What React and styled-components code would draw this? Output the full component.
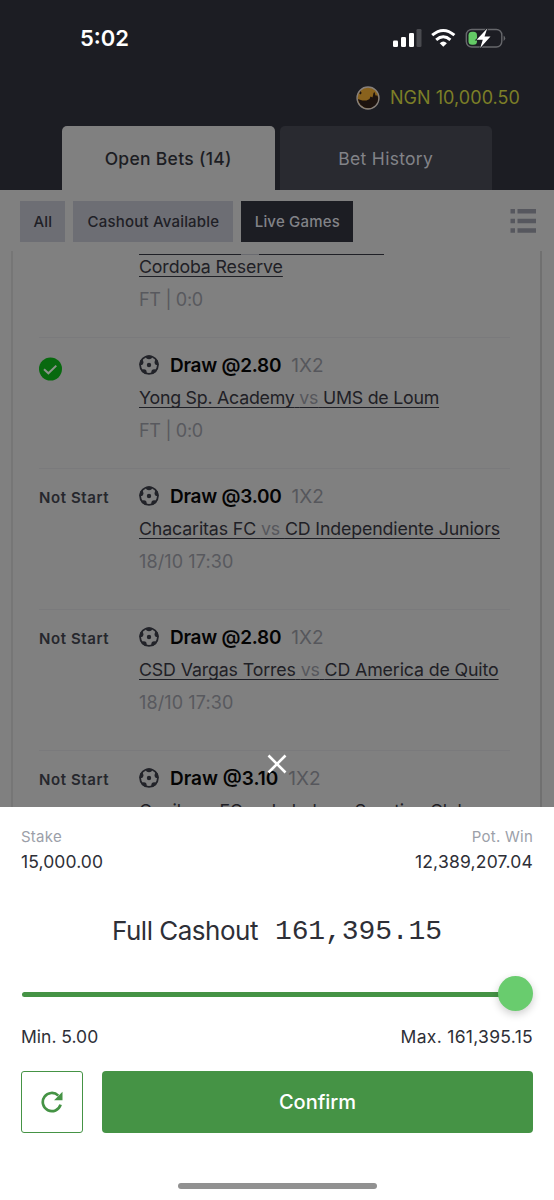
import styled, { createGlobalStyle } from 'styled-components';

const GlobalStyle = createGlobalStyle`
  * {
    box-sizing: border-box;
  }

  body {
    margin: 0;
    font-family: Inter, "Liberation Sans", sans-serif;
    background-color: #808080;
  }
`;

const Screen = styled.div`
  position: relative;
  width: 554px;
  height: 1200px;
  overflow: hidden;
  display: flex;
  flex-direction: column;
  background-color: #808080;
`;

const Header = styled.header`
  height: 190px;
  flex-shrink: 0;
  display: flex;
  flex-direction: column;
  background-color: #1c1d23;
`;

const StatusBar = styled.div`
  height: 75px;
  padding: 0 48px 0 80px;
  display: flex;
  align-items: center;
  justify-content: space-between;
`;

const Time = styled.span`
  font-size: 22px;
  font-weight: 600;
  color: #ffffff;
`;

const Balance = styled.div`
  height: 45px;
  padding-right: 34px;
  display: flex;
  align-items: center;
  justify-content: flex-end;
  gap: 10px;
  font-size: 18px;
  letter-spacing: 0.05px;
  color: #7c7f27;
`;

const Tabs = styled.div`
  height: 64px;
  margin-top: auto;
  padding: 0 62px;
  display: grid;
  grid-template-columns: 1fr 1fr;
  gap: 5px;
`;

const Tab = styled.div`
  display: flex;
  align-items: center;
  justify-content: center;
  border-radius: 5px 5px 0 0;
  font-size: 17.5px;
  font-weight: ${(props) => (props.$active ? 500 : 400)};
  letter-spacing: 0.3px;
  color: ${(props) => (props.$active ? '#1c1d23' : '#828388')};
  background-color: ${(props) => (props.$active ? '#808080' : '#292a30')};
`;

const Filters = styled.div`
  height: 61px;
  flex-shrink: 0;
  padding: 1px 18px 0 20.4px;
  display: flex;
  align-items: center;
  gap: 8px;
`;

const Filter = styled.div`
  width: ${(props) => props.$width};
  height: 41px;
  display: flex;
  align-items: center;
  justify-content: center;
  font-size: 15px;
  font-weight: 500;
  letter-spacing: 0.2px;
  color: ${(props) => (props.$active ? '#828388' : '#1f2026')};
  background-color: ${(props) => (props.$active ? '#1c1d23' : '#6d6e74')};
`;

const ListIcon = styled.svg`
  margin: -1px 0 0 auto;
`;

const BetCard = styled.main`
  height: 556px;
  flex-shrink: 0;
  margin: 0 12px 0 11px;
  padding: 0 30px 0 26px;
  overflow: hidden;
  border-left: 2px solid #767676;
  border-right: 2px solid #707070;
`;

const Bet = styled.div`
  height: ${(props) => props.$height};
  display: grid;
  grid-template-columns: 100px 1fr;
  border-bottom: 1px solid #7a7a7c;
`;

const Status = styled.div`
  padding-top: 17px;
  font-size: 15px;
  font-weight: 600;
  line-height: 24px;
  letter-spacing: 0.6px;
  color: #26272d;
`;

const Details = styled.div`
  padding-top: ${(props) => props.$top || '11px'};
  white-space: nowrap;
`;

const Pick = styled.div`
  height: 32px;
  display: flex;
  align-items: center;
  font-size: 19px;
  font-weight: 600;
  color: #040404;
`;

const Odds = styled.span`
  margin-left: 11px;
  letter-spacing: ${(props) => props.$spacing || '-0.25px'};
`;

const Market = styled.span`
  margin-left: 10px;
  font-weight: 400;
  color: #56575c;
`;

const Teams = styled.div`
  height: 33px;
  margin-top: ${(props) => props.$offset || '0'};
  line-height: 33px;
  font-size: 17.8px;
  letter-spacing: ${(props) => props.$spacing || '-0.14px'};
  color: #1f2026;
  text-decoration: underline;
  text-decoration-thickness: 1px;
  text-underline-offset: 3px;
  text-decoration-skip-ink: none;
`;

const Versus = styled.span`
  color: #56575c;
`;

const Kickoff = styled.div`
  height: 32px;
  margin-top: 1px;
  line-height: 32px;
  font-size: 18px;
  letter-spacing: ${(props) => props.$spacing || '0.1px'};
  color: #58595e;
`;

const CutUnderline = styled.div`
  height: 1px;
  display: flex;
`;

const Dash = styled.span`
  width: ${(props) => props.$width};
  background-color: ${(props) => props.$color || '#1f2026'};
`;

const CloseIcon = styled.svg`
  position: absolute;
  left: 267px;
  top: 754px;
`;

const Sheet = styled.section`
  flex: 1;
  padding: 20px 21px 0;
  display: flex;
  flex-direction: column;
  color: #2e2f37;
  background-color: #ffffff;
`;

const SplitRow = styled.div`
  display: flex;
  justify-content: space-between;
`;

const Figure = styled.div`
  text-align: ${(props) => props.$align || 'left'};
`;

const Label = styled.div`
  height: 20px;
  line-height: 20px;
  font-size: 15px;
  letter-spacing: 0.25px;
  color: #9c9fa9;
`;

const Value = styled.div`
  height: 30px;
  line-height: 30px;
  font-size: 17.5px;
  letter-spacing: ${(props) => props.$spacing || '0.1px'};
`;

const Cashout = styled.div`
  height: 98px;
  padding-top: 8px;
  display: flex;
  align-items: center;
  justify-content: center;
  gap: 17px;
  font-size: 26px;
  letter-spacing: -0.5px;
`;

const Amount = styled.span`
  margin-top: 2px;
  font-family: "Liberation Mono", monospace;
  font-size: 28px;
  letter-spacing: -0.1px;
`;

const Slider = styled.div`
  height: 36px;
  display: flex;
  align-items: center;
`;

const Track = styled.div`
  height: 5px;
  flex: 1;
  margin: 3px -1px 0 1px;
  border-radius: 3px 0 0 3px;
  background-color: #459345;
`;

const Thumb = styled.div`
  width: 35px;
  height: 35px;
  border-radius: 50%;
  background-color: #69cc6e;
  box-shadow: 0 3px 8px rgba(0, 0, 0, 0.2);
`;

const Limits = styled(SplitRow)`
  height: 60px;
  padding-top: 11px;
`;

const Actions = styled.div`
  display: flex;
  gap: 19px;
`;

const RefreshButton = styled.button`
  width: 62px;
  height: 62px;
  padding: 0;
  display: flex;
  align-items: center;
  justify-content: center;
  border: 1.5px solid #459345;
  border-radius: 3px;
  background: none;
`;

const ConfirmButton = styled.button`
  flex: 1;
  height: 62px;
  padding: 0;
  border: none;
  border-radius: 4px;
  font-family: inherit;
  font-size: 20px;
  font-weight: 500;
  color: #ffffff;
  background-color: #459345;
`;

const HomeIndicator = styled.div`
  width: 199px;
  height: 6px;
  margin: auto auto 11px;
  border-radius: 3px;
  background-color: #919191;
`;

const WonMark = styled.svg`
  display: block;
  margin-top: 2px;
`;

const Ball = () => (
  <svg width="20" height="20" viewBox="0 0 20 20">
    <clipPath id="ball">
      <circle cx="10" cy="10" r="9.8" />
    </clipPath>
    <circle cx="10" cy="10" r="8.900" fill="none" stroke="#222329" strokeWidth="1.800" />
    <g fill="#222329" clipPath="url(#ball)">
      <circle cx="10" cy="10" r="2.200" />
      <circle cx="10" cy="1" r="3.200" />
      <circle cx="18.500" cy="7.200" r="2.900" />
      <circle cx="15.200" cy="17.200" r="2.900" />
      <circle cx="4.800" cy="17.200" r="2.900" />
      <circle cx="1.500" cy="7.200" r="2.900" />
    </g>
  </svg>
);

const WonIcon = () => (
  <WonMark width="24" height="24" viewBox="0 0 24 24">
    <circle cx="11.500" cy="12" r="11.500" fill="#08690f" />
    <path d="M5 12.200l4.400 4.100 7.900-7.700" fill="none" stroke="#8b948b" strokeWidth="2" />
  </WonMark>
);

const Avatar = () => (
  <svg width="24" height="24" viewBox="0 0 24 24">
    <circle cx="12" cy="12" r="11" fill="#89621d" />
    <path
      fill="#1d130f"
      d="M1.500 13l5 1.500 4 0 3-1.500 1-2.500 2 1 1-4.500 1-1 1 3.500 2 0 1 4-1 4-3.500 3.500-5 1.500-5-1-4-3zM3 7l1.500-2 1.200 2-1.200 1.500z"
    />
    <circle cx="12" cy="12" r="11" fill="none" stroke="#87807c" strokeWidth="1.300" />
  </svg>
);

const StatusIcons = () => (
  <svg width="113" height="20" viewBox="393 27 113 20">
    <g fill="#ffffff">
      <rect x="393" y="39.500" width="5" height="6.500" rx="1.300" />
      <rect x="401" y="36" width="5" height="10" rx="1.300" />
      <rect x="409" y="32" width="5" height="14" rx="1.300" />
      <rect x="416.500" y="28" width="5" height="18" rx="1.300" fill="#494a4f" />
      <path d="M443.300 45.800l-3.600-3.600q3.600-3.200 7.200 0z" />
    </g>
    <g fill="none" stroke="#ffffff" strokeWidth="3">
      <path d="M432.200 34.200q11.100-9.500 22.200 0" />
      <path d="M436.200 38.800q7.100-6 14.200 0" />
    </g>
    <rect x="466.300" y="28.500" width="35.500" height="17.500" rx="5.500" fill="none" stroke="#66676b" strokeWidth="1.400" />
    <path d="M503.600 34.500q3.200 2.700 0 5.500z" fill="#66676b" />
    <rect x="468.500" y="30.800" width="8.500" height="13" rx="3.500" fill="#63ca65" />
    <path
      d="M487.200 27.500l-10.600 11.200h6.200l-2.600 8.200 10.300-11.400h-6z"
      fill="#ffffff"
      stroke="#1c1d23"
      strokeWidth="1.600"
      paintOrder="stroke"
    />
  </svg>
);

const bets = [
  {
    status: 'won',
    odds: '2.80',
    home: 'Yong Sp. Academy',
    away: 'UMS de Loum',
    time: 'FT | 0:0',
    height: '131px',
    teamSpacing: '-0.24px',
    timeSpacing: '-0.3px',
  },
  { status: 'Not Start', odds: '3.00', home: 'Chacaritas FC', away: 'CD Independiente Juniors', time: '18/10 17:30', height: '141px' },
  { status: 'Not Start', odds: '2.80', home: 'CSD Vargas Torres', away: 'CD America de Quito', time: '18/10 17:30', height: '141px' },
  {
    status: 'Not Start',
    odds: '3.10',
    home: 'Cuniburo FC',
    away: 'Imbabura Sporting Club',
    time: '18/10 17:30',
    height: '141px',
    oddsSpacing: '0',
  },
];

export default function App() {
  return (
    <Screen>
      <GlobalStyle />
      <Header>
        <StatusBar>
          <Time>5:02</Time>
          <StatusIcons />
        </StatusBar>
        <Balance>
          <Avatar />
          <span>NGN 10,000.50</span>
        </Balance>
        <Tabs>
          <Tab $active>Open Bets (14)</Tab>
          <Tab>Bet History</Tab>
        </Tabs>
      </Header>

      <Filters>
        <Filter $width="45px">All</Filter>
        <Filter $width="160px">Cashout Available</Filter>
        <Filter $width="112px" $active>Live Games</Filter>
        <ListIcon width="26" height="24" viewBox="0 0 26 24" fill="#56575e">
          <path d="M.500 0h4.500v4.500H.500zM7.500 0H26v4.500H7.500zM.500 9.700h4.500v4.500H.500zM7.500 9.700H26v4.500H7.500zM.500 19.200h4.500v4.500H.500zM7.500 19.200H26v4.500H7.500z" />
        </ListIcon>
      </Filters>

      <BetCard>
        <Bet $height="87px">
          <Status />
          <Details $top="3px">
            <CutUnderline>
              <Dash $width="102px" />
              <Dash $width="18px" $color="#6a6b70" />
              <Dash $width="125px" />
            </CutUnderline>
            <Teams $offset="-5px">Cordoba Reserve</Teams>
            <Kickoff $spacing="-0.3px">FT | 0:0</Kickoff>
          </Details>
        </Bet>
        {bets.map((bet) => (
          <Bet key={bet.home} $height={bet.height}>
            <Status>{bet.status === 'won' ? <WonIcon /> : bet.status}</Status>
            <Details>
              <Pick>
                <Ball />
                <Odds $spacing={bet.oddsSpacing}>Draw @{bet.odds}</Odds>
                <Market>1X2</Market>
              </Pick>
              <Teams $spacing={bet.teamSpacing}>
                {bet.home} <Versus>vs</Versus> {bet.away}
              </Teams>
              <Kickoff $spacing={bet.timeSpacing}>{bet.time}</Kickoff>
            </Details>
          </Bet>
        ))}
      </BetCard>

      <Sheet>
        <SplitRow>
          <Figure>
            <Label>Stake</Label>
            <Value>15,000.00</Value>
          </Figure>
          <Figure $align="right">
            <Label>Pot. Win</Label>
            <Value $spacing="0.2px">12,389,207.04</Value>
          </Figure>
        </SplitRow>
        <Cashout>
          <span>Full Cashout</span>
          <Amount>161,395.15</Amount>
        </Cashout>
        <Slider>
          <Track />
          <Thumb />
        </Slider>
        <Limits>
          <Value $spacing="0">Min. 5.00</Value>
          <Value $spacing="0.3px">Max. 161,395.15</Value>
        </Limits>
        <Actions>
          <RefreshButton aria-label="Refresh">
            <svg width="22" height="22" viewBox="0 0 22 22">
              <path d="M19.600 13.700A9.100 9.100 0 1 1 17.300 4.600" fill="none" stroke="#459345" strokeWidth="2.700" />
              <path d="M21.500.8v8.400h-8.400z" fill="#459345" />
            </svg>
          </RefreshButton>
          <ConfirmButton>Confirm</ConfirmButton>
        </Actions>
        <HomeIndicator />
      </Sheet>

      <CloseIcon width="20" height="20" viewBox="0 0 20 20">
        <path d="M1.500 1.500l17 17M18.500 1.500l-17 17" stroke="#ffffff" strokeWidth="2.600" />
      </CloseIcon>
    </Screen>
  );
}
